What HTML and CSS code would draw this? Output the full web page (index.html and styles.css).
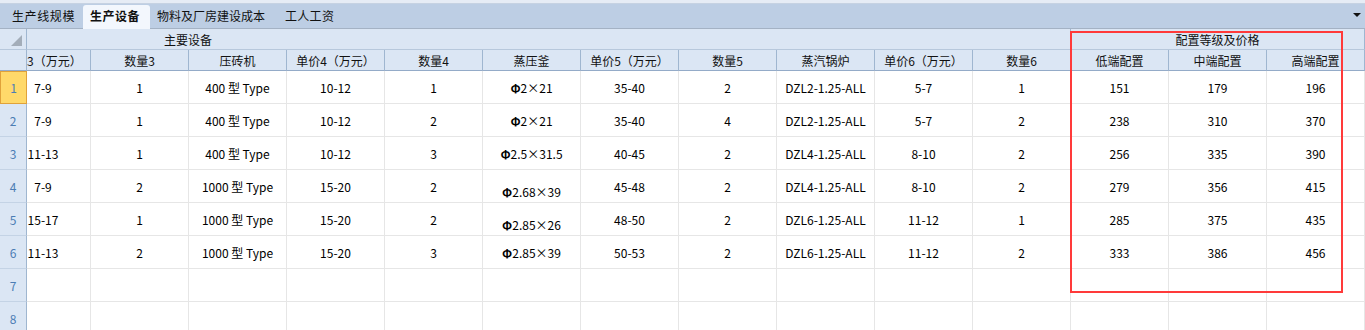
FILE: index.html
```html
<!DOCTYPE html>
<html lang="zh">
<head>
<meta charset="utf-8">
<title>生产设备</title>
<link rel="stylesheet" href="styles.css">
</head>
<body>
<div class="app">
  <div class="topline"></div>
  <div class="tabbar">
    <div class="tab t1">生产线规模</div>
    <div class="tab t2 active">生产设备</div>
    <div class="tab t3">物料及厂房建设成本</div>
    <div class="tab t4">工人工资</div>
    <div class="spacer"></div>
    <div class="dropdown"></div>
  </div>
  <div class="sheet">
    <div class="grid">
      <!-- header row 1 -->
      <div class="hc corner"><span class="tri"></span></div>
      <div class="hc group main">主要设备</div>
      <div class="hc group cfg">配置等级及价格</div>
      <div class="hc"></div>
      <!-- header row 2 -->
      <div class="hc corner2"></div>
      <div class="hc h2 first"><span>3（万元）</span></div>
      <div class="hc h2">数量3</div>
      <div class="hc h2">压砖机</div>
      <div class="hc h2">单价4（万元）</div>
      <div class="hc h2">数量4</div>
      <div class="hc h2">蒸压釜</div>
      <div class="hc h2">单价5（万元）</div>
      <div class="hc h2">数量5</div>
      <div class="hc h2">蒸汽锅炉</div>
      <div class="hc h2">单价6（万元）</div>
      <div class="hc h2">数量6</div>
      <div class="hc h2">低端配置</div>
      <div class="hc h2">中端配置</div>
      <div class="hc h2">高端配置</div>
      <div class="hc h2"></div>

      <!-- row 1 -->
      <div class="rh sel">1</div>
      <div class="c first"><span>7-9</span></div>
      <div class="c">1</div>
      <div class="c">400 型 Type</div>
      <div class="c">10-12</div>
      <div class="c">1</div>
      <div class="c"><b>Φ</b>2×21</div>
      <div class="c">35-40</div>
      <div class="c">2</div>
      <div class="c">DZL2-1.25-ALL</div>
      <div class="c">5-7</div>
      <div class="c">1</div>
      <div class="c">151</div>
      <div class="c">179</div>
      <div class="c">196</div>
      <div class="c"></div>

      <!-- row 2 -->
      <div class="rh">2</div>
      <div class="c first"><span>7-9</span></div>
      <div class="c">1</div>
      <div class="c">400 型 Type</div>
      <div class="c">10-12</div>
      <div class="c">2</div>
      <div class="c"><b>Φ</b>2×21</div>
      <div class="c">35-40</div>
      <div class="c">4</div>
      <div class="c">DZL2-1.25-ALL</div>
      <div class="c">5-7</div>
      <div class="c">2</div>
      <div class="c">238</div>
      <div class="c">310</div>
      <div class="c">370</div>
      <div class="c"></div>

      <!-- row 3 -->
      <div class="rh">3</div>
      <div class="c first"><span>11-13</span></div>
      <div class="c">1</div>
      <div class="c">400 型 Type</div>
      <div class="c">10-12</div>
      <div class="c">3</div>
      <div class="c"><b>Φ</b>2.5×31.5</div>
      <div class="c">40-45</div>
      <div class="c">2</div>
      <div class="c">DZL4-1.25-ALL</div>
      <div class="c">8-10</div>
      <div class="c">2</div>
      <div class="c">256</div>
      <div class="c">335</div>
      <div class="c">390</div>
      <div class="c"></div>

      <!-- row 4 -->
      <div class="rh">4</div>
      <div class="c first"><span>7-9</span></div>
      <div class="c">2</div>
      <div class="c">1000 型 Type</div>
      <div class="c">15-20</div>
      <div class="c">2</div>
      <div class="c low"><b>Φ</b>2.68×39</div>
      <div class="c">45-48</div>
      <div class="c">2</div>
      <div class="c">DZL4-1.25-ALL</div>
      <div class="c">8-10</div>
      <div class="c">2</div>
      <div class="c">279</div>
      <div class="c">356</div>
      <div class="c">415</div>
      <div class="c"></div>

      <!-- row 5 -->
      <div class="rh">5</div>
      <div class="c first"><span>15-17</span></div>
      <div class="c">1</div>
      <div class="c">1000 型 Type</div>
      <div class="c">15-20</div>
      <div class="c">2</div>
      <div class="c low"><b>Φ</b>2.85×26</div>
      <div class="c">48-50</div>
      <div class="c">2</div>
      <div class="c">DZL6-1.25-ALL</div>
      <div class="c">11-12</div>
      <div class="c">1</div>
      <div class="c">285</div>
      <div class="c">375</div>
      <div class="c">435</div>
      <div class="c"></div>

      <!-- row 6 -->
      <div class="rh">6</div>
      <div class="c first"><span>11-13</span></div>
      <div class="c">2</div>
      <div class="c">1000 型 Type</div>
      <div class="c">15-20</div>
      <div class="c">3</div>
      <div class="c"><b>Φ</b>2.85×39</div>
      <div class="c">50-53</div>
      <div class="c">2</div>
      <div class="c">DZL6-1.25-ALL</div>
      <div class="c">11-12</div>
      <div class="c">2</div>
      <div class="c">333</div>
      <div class="c">386</div>
      <div class="c">456</div>
      <div class="c"></div>

      <!-- row 7 -->
      <div class="rh">7</div>
      <div class="c first"></div>
      <div class="c"></div><div class="c"></div><div class="c"></div><div class="c"></div>
      <div class="c"></div><div class="c"></div><div class="c"></div><div class="c"></div>
      <div class="c"></div><div class="c"></div><div class="c"></div><div class="c"></div>
      <div class="c"></div><div class="c"></div>

      <!-- row 8 -->
      <div class="rh">8</div>
      <div class="c first"></div>
      <div class="c"></div><div class="c"></div><div class="c"></div><div class="c"></div>
      <div class="c"></div><div class="c"></div><div class="c"></div><div class="c"></div>
      <div class="c"></div><div class="c"></div><div class="c"></div><div class="c"></div>
      <div class="c"></div><div class="c"></div>
    </div>
    <div class="highlight-box"></div>
  </div>
</div>
</body>
</html>
```

FILE: styles.css
```css
* { box-sizing: border-box; }

html, body {
  margin: 0;
  padding: 0;
  background: #ffffff;
}

body {
  width: 1365px;
  height: 330px;
  overflow: hidden;
  font-family: "Noto Sans CJK SC", "Liberation Sans", sans-serif;
  font-size: 12px;
  color: #000;
}

.app {
  width: 1365px;
  height: 330px;
  overflow: hidden;
}

.topline {
  height: 4px;
  background: #e6ecf5;
  border-bottom: 1px solid #c6d2e2;
}

.tabbar {
  height: 25px;
  background: #bdcee4;
  border-bottom: 1px solid #a4b2c4;
  display: flex;
  align-items: flex-end;
  padding-left: 4px;
}

.tab {
  height: 23px;
  line-height: 21px;
  font-size: 12px;
  color: #111;
  white-space: nowrap;
}

.t1 { width: 79px; padding-left: 8px; letter-spacing: 0.6px; }
.t2 { width: 67px; padding-left: 7px; }
.t3 { width: 127px; padding-left: 7px; }
.t4 { width: 64px; padding-left: 8px; letter-spacing: 0.3px; }

.tab.active {
  background: #f3f7fd;
  border-radius: 3px 3px 0 0;
  font-weight: 700;
  letter-spacing: 0.5px;
  margin-bottom: -1px;
  height: 24px;
}

.spacer { flex: 1; }

.dropdown {
  width: 0;
  height: 0;
  border-left: 4px solid transparent;
  border-right: 4px solid transparent;
  border-top: 4px solid #111;
  margin: 0 4px 11px 0;
}

.sheet {
  position: relative;
}

.grid {
  display: grid;
  grid-template-columns: 27px 64px repeat(13, 98px) 1fr;
  grid-template-rows: 21px 21px repeat(8, 33px);
  width: 1365px;
}

.hc {
  background: #dbe6f4;
  border-right: 1px solid #9fb6d0;
  border-bottom: 1px solid #b7c8dc;
  display: flex;
  align-items: center;
  justify-content: center;
  white-space: nowrap;
  overflow: hidden;
  font-size: 12px;
  color: #111;
}

.hc.h2 {
  border-bottom: 1px solid #94abc8;
}

.corner {
  position: relative;
  border-right: 1px solid #9fb6d0;
}

.corner2 {
  border-bottom: 1px solid #94abc8;
}

.tri {
  position: absolute;
  right: 4px;
  bottom: 3px;
  width: 0;
  height: 0;
  border-left: 11px solid transparent;
  border-bottom: 11px solid #a3adb9;
}

.group.main {
  grid-column: span 11;
  justify-content: flex-start;
  padding-left: 137px;
  border-right: 1px solid #9fb6d0;
}

.group.cfg {
  grid-column: span 3;
}

.hc.first {
  justify-content: flex-start;
  padding-left: 0;
}

.hc.first span { flex-shrink: 0; }

.rh {
  background: #dbe6f4;
  border-right: 1px solid #9fb6d0;
  border-bottom: 1px solid #c4d3e5;
  color: #4c7db4;
  display: flex;
  align-items: center;
  justify-content: center;
  font-size: 12px;
}

.rh.sel {
  background: #ffd96a;
  border: 1px solid #e0a23a;
}

.c {
  border-right: 1px solid #e6e6e6;
  border-bottom: 1px solid #e6e6e6;
  display: flex;
  align-items: center;
  justify-content: center;
  white-space: nowrap;
  overflow: hidden;
  font-size: 12px;
  background: #fff;
}

.c b { font-weight: 700; }

.c.first {
  justify-content: center;
  padding-right: 31px;
}

.c.first span { flex-shrink: 0; }

.c.low {
  padding-top: 10px;
}

.highlight-box {
  position: absolute;
  left: 1070px;
  top: 2px;
  width: 273px;
  height: 262px;
  border: 2px solid #ff3a3a;
  pointer-events: none;
}
```
